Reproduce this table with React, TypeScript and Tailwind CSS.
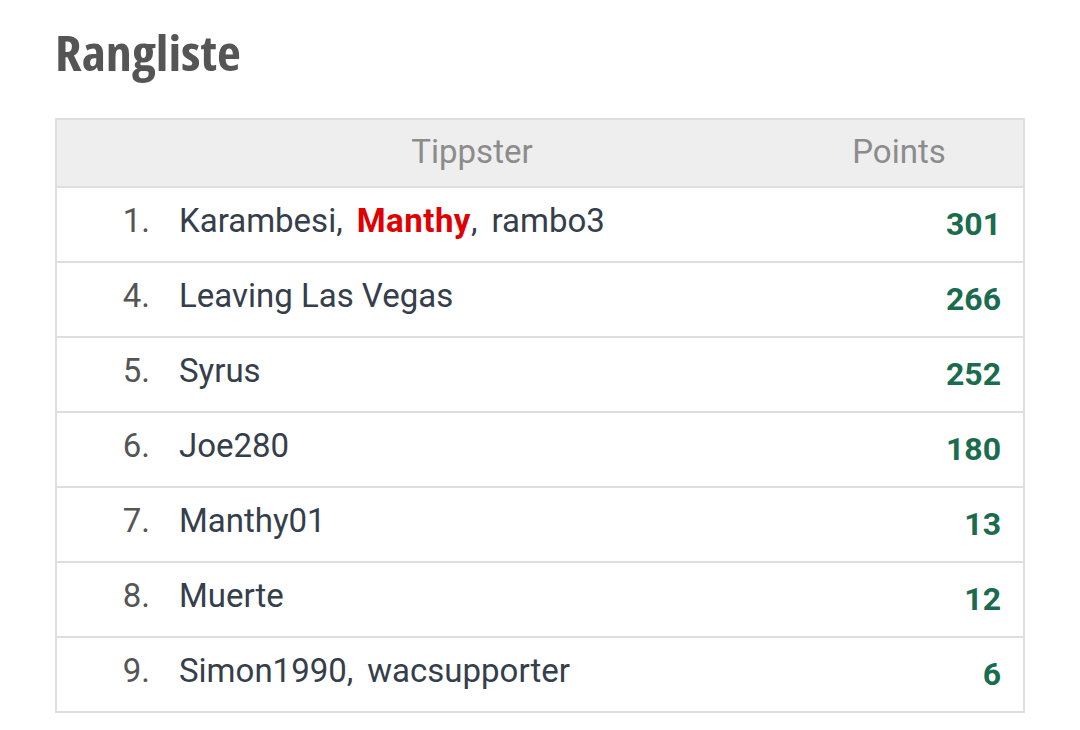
const rows: { rank: number; names: { name: string; me?: boolean }[]; points: number }[] = [
  { rank: 1, names: [{ name: "Karambesi" }, { name: "Manthy", me: true }, { name: "rambo3" }], points: 301 },
  { rank: 4, names: [{ name: "Leaving Las Vegas" }], points: 266 },
  { rank: 5, names: [{ name: "Syrus" }], points: 252 },
  { rank: 6, names: [{ name: "Joe280" }], points: 180 },
  { rank: 7, names: [{ name: "Manthy01" }], points: 13 },
  { rank: 8, names: [{ name: "Muerte" }], points: 12 },
  { rank: 9, names: [{ name: "Simon1990" }, { name: "wacsupporter" }], points: 6 },
];

export default function App() {
  return (
    <div className="min-h-[730px] w-[1080px] bg-white pl-[55px] pt-[29px] font-['Roboto',sans-serif]">
      <h1 className="h-[48px] w-fit origin-left scale-x-[1.085] font-['Open_Sans',sans-serif] text-[48px] font-bold leading-none text-[#555] [font-stretch:75%]">
        Rangliste
      </h1>
      <div className="mt-[41px] w-[970px] border-2 border-[#dedede]">
        <div className="grid h-[66px] grid-cols-[1fr_248px] bg-[#eeeeee] text-[33px] leading-none text-[#8c8c8c]">
          <div className="pl-[112px] pt-[15px] text-center">Tippster</div>
          <div className="pt-[15px] text-center">Points</div>
        </div>
        {rows.map((r) => (
          <div
            key={r.rank}
            className="grid h-[75px] grid-cols-[103px_1fr_auto] border-t-2 border-[#dedede] leading-none"
          >
            <div className="pr-[10px] pt-[16px] text-right text-[33px] text-[#555]">{r.rank}.</div>
            <div className="pl-[19px] pt-[16px] text-[33px] text-[#353e4b]">
              {r.names.map((n, i) => (
                <span key={n.name}>
                  {n.me ? (
                    <span className="font-bold tracking-[0.5px] text-[#e00000]">{n.name}</span>
                  ) : (
                    n.name
                  )}
                  {i < r.names.length - 1 && <span className="mr-[14px]">,</span>}
                </span>
              ))}
            </div>
            <div className="pr-[22px] pt-[20px] text-[32px] font-bold text-[#1b6b4f]">{r.points}</div>
          </div>
        ))}
      </div>
    </div>
  );
}
